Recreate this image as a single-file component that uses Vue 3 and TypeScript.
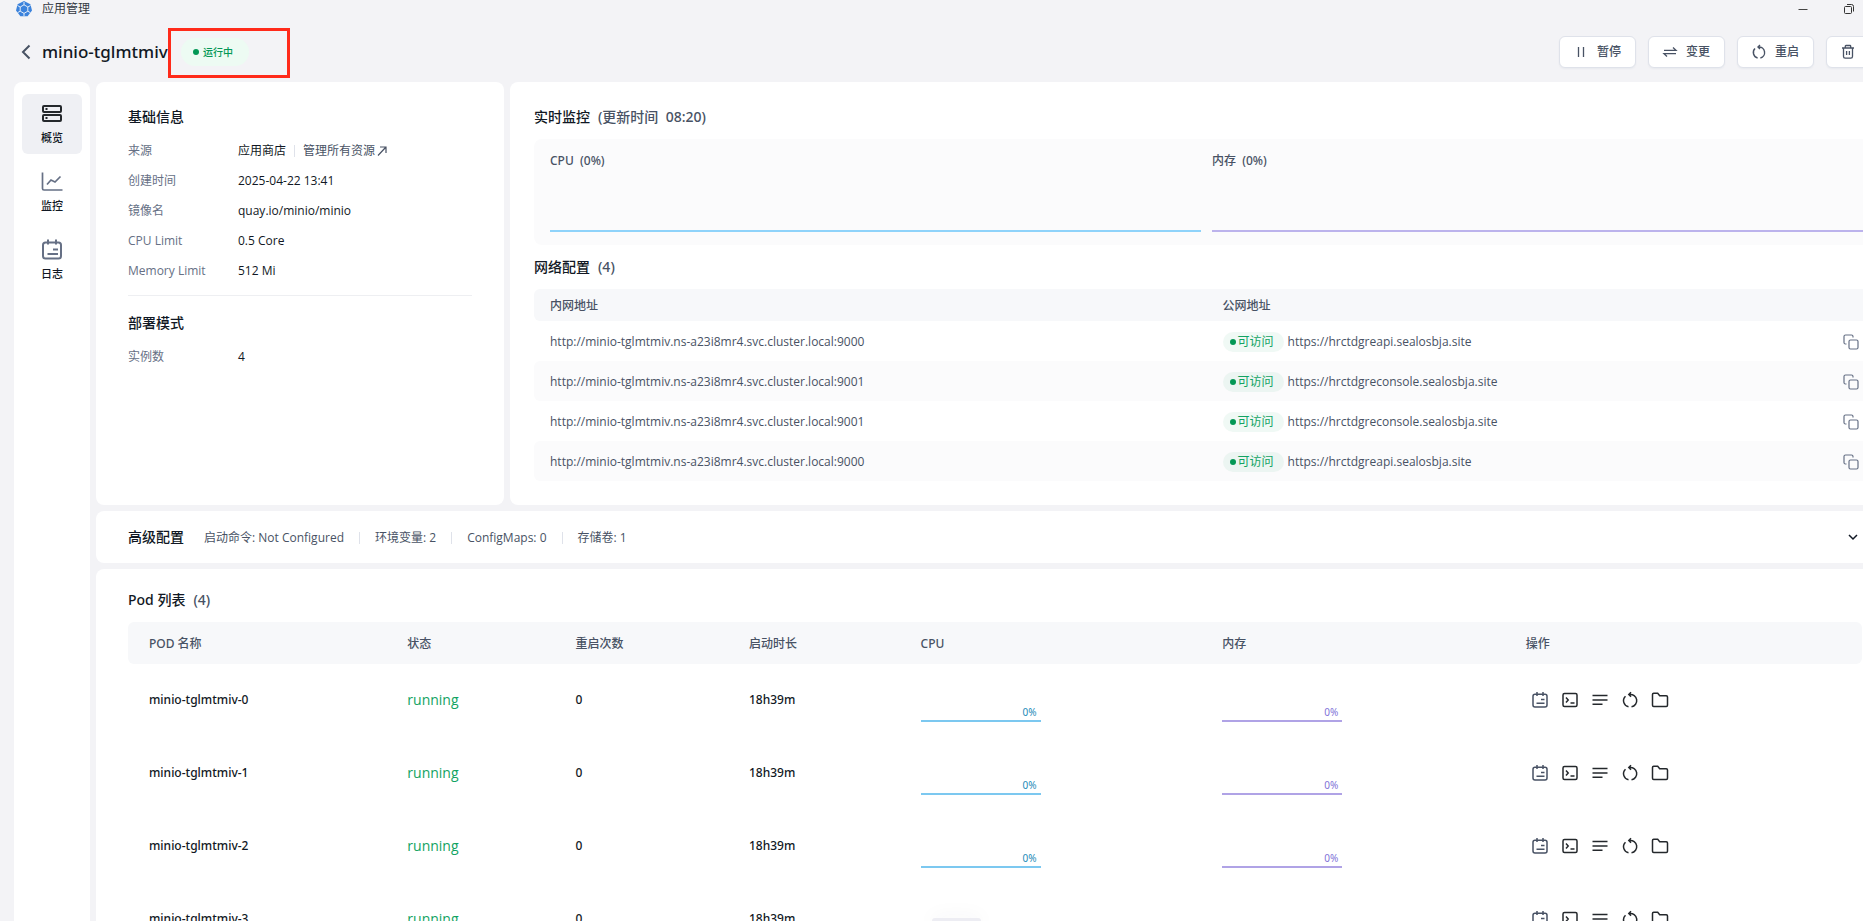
<script setup lang="ts">
interface PodRow { name: string; status: string; restarts: number; age: string }
interface NetRow { inner: string; outer: string }

const nav = [
  { key: 'overview', label: '概览' },
  { key: 'monitor', label: '监控' },
  { key: 'logs', label: '日志' },
]
const info = [
  ['创建时间', '2025-04-22 13:41'],
  ['镜像名', 'quay.io/minio/minio'],
  ['CPU Limit', '0.5 Core'],
  ['Memory Limit', '512 Mi'],
]
const host = 'http://minio-tglmtmiv.ns-a23i8mr4.svc.cluster.local'
const nets: NetRow[] = [
  { inner: `${host}:9000`, outer: 'https://hrctdgreapi.sealosbja.site' },
  { inner: `${host}:9001`, outer: 'https://hrctdgreconsole.sealosbja.site' },
  { inner: `${host}:9001`, outer: 'https://hrctdgreconsole.sealosbja.site' },
  { inner: `${host}:9000`, outer: 'https://hrctdgreapi.sealosbja.site' },
]
const advanced = ['启动命令: Not Configured', '环境变量: 2', 'ConfigMaps: 0', '存储卷: 1']
const pods: PodRow[] = [0, 1, 2, 3].map((i) => ({
  name: `minio-tglmtmiv-${i}`,
  status: 'running',
  restarts: 0,
  age: '18h39m',
}))
</script>

<template>
  <div class="screen">
    <div class="window">
      <div class="titlebar">
        <svg class="logo" viewBox="0 0 16 16" aria-hidden="true">
          <path d="M8 0 14.4 3.2 16 9.6 11.6 15.2H4.4L0 9.6 1.6 3.2Z" fill="#3b82dc" />
          <g stroke="#e4edf8" stroke-width="1" fill="none">
            <path d="M8 3.800 11.800 6v4.200L8 12.400 4.200 10.200V6Z" />
            <path d="M8 1V4M8 12.400v2.600M1.500 4.500l2.800 1.600M11.800 10.200l2.600 1.500M1.500 11.700l2.700-1.500M11.800 6l2.700-1.500" />
          </g>
        </svg>
        <span>应用管理</span>
        <div class="controls">
          <button type="button" aria-label="最小化">
            <svg width="12" height="12" viewBox="0 0 12 12"><path d="M1.500 6.500h9" stroke="#444" /></svg>
          </button>
          <button type="button" aria-label="还原">
            <svg width="12" height="12" viewBox="0 0 12 12" fill="none" stroke="#333">
              <rect x="1.500" y="3.500" width="7" height="7" rx="1" />
              <path d="M4 1.500h4.500a2 2 0 0 1 2 2V8.500" />
            </svg>
          </button>
        </div>
      </div>

      <header class="head">
        <button class="back" type="button" aria-label="返回">
          <svg width="12" height="16" viewBox="0 0 12 16" fill="none" stroke="#485264" stroke-width="2"><path d="M9.500 1.500 3 8l6.500 6.500" /></svg>
        </button>
        <h1>minio-tglmtmiv</h1>
        <span class="status"><i class="dot"></i>运行中</span>
        <div class="marker"></div>
        <div class="actions">
          <button type="button">
            <svg width="16" height="16" viewBox="0 0 16 16" fill="none" stroke="#485264" stroke-width="1.300"><path d="M5.500 3v10M10.500 3v10" /></svg>暂停
          </button>
          <button type="button">
            <svg width="16" height="16" viewBox="0 0 16 16" fill="none" stroke="#485264" stroke-width="1.300"><path d="M2 6.300h12L11 3.500M14 9.700H2L5 12.500" /></svg>变更
          </button>
          <button type="button">
            <svg width="16" height="16" viewBox="0 0 16 16" fill="none" stroke="#485264" stroke-width="1.400"><path d="M6.600 14A5.600 5.600 0 0 1 4 4.600M9.400 14A5.600 5.600 0 0 0 7.500 3M9 1 7 3l2 2" /></svg>重启
          </button>
          <button type="button" aria-label="删除">
            <svg width="16" height="16" viewBox="0 0 16 16" fill="none" stroke="#485264" stroke-width="1.300"><path d="M2 4h12M5.300 4V2.200q0-.7.700-.7h4q.7 0 .7.700V4M3.500 4v8.500q0 1.700 1.700 1.700h5.600q1.700 0 1.700-1.700V4M6.600 7v4M9.400 7v4" /></svg>
          </button>
        </div>
      </header>

      <div class="body">
        <nav class="side">
          <button v-for="(n, i) in nav" :key="n.key" type="button" :class="{ active: i === 0 }">
            <svg v-if="n.key === 'overview'" width="24" height="24" viewBox="0 0 24 24" fill="none" stroke="#24282c" stroke-width="2">
              <rect x="3" y="4" width="18" height="6" rx="1" /><rect x="3" y="13" width="18" height="6" rx="1" />
              <path d="M5.500 7h2M5.500 16h2" />
            </svg>
            <svg v-else-if="n.key === 'monitor'" width="24" height="24" viewBox="0 0 24 24" fill="none" stroke="#667085" stroke-width="1.700">
              <path d="M2.500 2.500V18.500q0 1.500 1.500 1.500H22.500M7 14.500l4-4.500 4 2 5.500-5.500" />
            </svg>
            <svg v-else width="24" height="24" viewBox="0 0 24 24" fill="none" stroke="#667085" stroke-width="2">
              <rect x="3" y="4.500" width="18" height="16" rx="2.500" /><path d="M8 1.500v5M16 1.500v5M13 11.500h5M7.500 16h10.500" />
            </svg>
            {{ n.label }}
          </button>
        </nav>

        <main class="content">
          <div class="top">
            <section class="card basic">
              <h2>基础信息</h2>
              <dl>
                <div>
                  <dt>来源</dt>
                  <dd>应用商店<i class="bar"></i><a href="#">管理所有资源<svg width="12" height="12" viewBox="0 0 12 12" fill="none" stroke="#485264" stroke-width="1.200"><path d="M2 10.500 10 2M4 2h6v6" /></svg></a></dd>
                </div>
                <div v-for="r in info" :key="r[0]"><dt>{{ r[0] }}</dt><dd>{{ r[1] }}</dd></div>
              </dl>
              <hr />
              <h2>部署模式</h2>
              <dl><div><dt>实例数</dt><dd>4</dd></div></dl>
            </section>

            <section class="card network">
              <h2>实时监控<span>(更新时间&nbsp; 08:20)</span></h2>
              <div class="charts">
                <div class="chart cpu">CPU&nbsp; (0%)</div>
                <div class="chart mem">内存&nbsp; (0%)</div>
              </div>
              <h2>网络配置<span>(4)</span></h2>
              <table class="nets">
                <thead><tr><th>内网地址</th><th>公网地址</th></tr></thead>
                <tbody>
                  <tr v-for="(n, i) in nets" :key="i">
                    <td>{{ n.inner }}</td>
                    <td>
                      <div class="public">
                        <span class="reach"><i class="dot"></i>可访问</span>
                        <a href="#">{{ n.outer }}</a>
                        <button type="button" aria-label="复制">
                          <svg width="16" height="16" viewBox="0 0 16 16" fill="none" stroke="#667085" stroke-width="1.200">
                            <rect x="6" y="6" width="9" height="9" rx="1.500" /><path d="M3.500 10H2.500Q1 10 1 8.500v-6Q1 1 2.500 1h6Q10 1 10 2.500v1" />
                          </svg>
                        </button>
                      </div>
                    </td>
                  </tr>
                </tbody>
              </table>
            </section>
          </div>

          <section class="card advanced">
            <h2>高级配置</h2>
            <ul><li v-for="a in advanced" :key="a">{{ a }}</li></ul>
            <button type="button" aria-label="展开">
              <svg width="16" height="16" viewBox="0 0 16 16" fill="none" stroke="#111824" stroke-width="1.500"><path d="m4 6 4 4 4-4" /></svg>
            </button>
          </section>

          <section class="card podcard">
            <h2>Pod 列表<span>(4)</span></h2>
            <table class="pods">
              <thead>
                <tr>
                  <th class="c-name">POD 名称</th><th class="c-status">状态</th><th class="c-restart">重启次数</th>
                  <th class="c-age">启动时长</th><th class="c-cpu">CPU</th><th class="c-mem">内存</th><th>操作</th>
                </tr>
              </thead>
              <tbody>
                <tr v-for="p in pods" :key="p.name">
                  <td>{{ p.name }}</td>
                  <td class="running">{{ p.status }}</td>
                  <td>{{ p.restarts }}</td>
                  <td>{{ p.age }}</td>
                  <td><div class="spark cpu">0%</div></td>
                  <td><div class="spark mem">0%</div></td>
                  <td>
                    <div class="ops">
                      <button type="button" aria-label="日志">
                        <svg viewBox="0 0 18 18" stroke="#485264"><rect x="2" y="3.300" width="14" height="12.700" rx="2" /><path d="M6 1v4M12 1v4M10 8.600h3.500M5.500 12.300h8" /></svg>
                      </button>
                      <button type="button" aria-label="终端">
                        <svg viewBox="0 0 18 18"><rect x="2" y="2.500" width="14" height="13" rx="1.500" /><path d="m5 6.500 2.200 2.500L5 11.500M9.500 12h4" /></svg>
                      </button>
                      <button type="button" aria-label="详情">
                        <svg viewBox="0 0 18 18"><path d="M1.500 4.500h15M1.500 9h15M1.500 13.300h10" /></svg>
                      </button>
                      <button type="button" aria-label="重启">
                        <svg viewBox="0 0 18 18"><path d="M7.500 15.800A6.200 6.200 0 0 1 4.500 5.200M10.500 15.800A6.200 6.200 0 0 0 8.500 3.500M10 1.300 7.800 3.600 10 5.800" /></svg>
                      </button>
                      <button type="button" aria-label="文件">
                        <svg viewBox="0 0 18 18"><path d="M1.500 3.500q0-1.200 1.200-1.200h4l2 2.400h6.600q1.200 0 1.200 1.200v8.400q0 1.200-1.200 1.200H2.700q-1.200 0-1.200-1.200Z" /></svg>
                      </button>
                    </div>
                  </td>
                </tr>
              </tbody>
            </table>
          </section>
        </main>
      </div>
    </div>
    <div class="dock"></div>
  </div>
</template>

<style>
body { margin: 0; background: #f3f3f6; }
</style>

<style scoped>
* { box-sizing: border-box; }
.screen {
  position: relative;
  height: 100vh;
  overflow: hidden;
  background: #f3f3f6;
  color: #111824;
  font: 400 12px/18px "Open Sans", "Noto Sans CJK SC", sans-serif;
}
/* The window runs past the right edge of the screen. */
.window { width: calc(100% + 40px); display: flex; flex-direction: column; }
h1, h2, dl, dd, ul { margin: 0; padding: 0; }
h1, h2, th, .pods td, .chart { font-family: "Noto Sans", "Noto Sans CJK SC", sans-serif; }
button { border: 0; padding: 0; background: none; font: inherit; color: inherit; display: flex; align-items: center; justify-content: center; cursor: pointer; }
a { color: inherit; text-decoration: none; }
svg { flex: none; }
h2 { font-size: 14px; line-height: 20px; font-weight: 500; }
h2 span { margin-left: 8px; color: #485264; font-weight: 500; }

.titlebar { height: 22px; padding: 0 48px 5px 16px; display: flex; align-items: center; gap: 10px; color: #333943; }
.logo { width: 16px; height: 16px; }
.controls { margin-left: auto; display: flex; gap: 34px; }

.head { position: relative; height: 60px; padding: 0 0 0 20px; display: flex; align-items: center; }
.back { width: 12px; }
h1 { margin-left: 10px; font-size: 17px; line-height: 24px; font-weight: 500; width: 139px; white-space: nowrap; }
.status { height: 28px; padding: 0 16px 0 12px; display: flex; align-items: center; gap: 4px; border-radius: 14px; background: #edfbf3; color: #039855; font-size: 10px; font-weight: 500; }
.dot { width: 6px; height: 6px; border-radius: 50%; background: #039855; }
.marker { position: absolute; left: 168px; top: 6px; width: 122px; height: 50px; border: 3px solid #ff2a1a; }
.actions { margin-left: auto; display: flex; gap: 12px; }
.actions button { height: 32px; min-width: 77px; padding: 0 13px; gap: 8px; justify-content: flex-start; border: 1px solid #dfe2ea; border-radius: 6px; background: #fff; color: #485264; font-weight: 500; box-shadow: 0 1px 2px rgba(19, 51, 107, 0.05); }

.body { display: flex; gap: 6px; padding-left: 14px; align-items: stretch; }
.side { flex: none; width: 76px; padding: 12px 8px; display: flex; flex-direction: column; gap: 8px; background: #fff; border-radius: 8px; }
.side button { width: 60px; height: 60px; flex-direction: column; gap: 4px; border-radius: 6px; font-size: 11px; line-height: 16px; font-weight: 500; }
.side .active { background: #eff0f4; }

.content { flex: 1; min-width: 0; display: flex; flex-direction: column; gap: 6px; }
.card { background: #fff; border-radius: 8px; }
.top { display: flex; gap: 6px; }
.basic { flex: none; width: 408px; padding: 25px 32px; }
dl > div { display: flex; height: 18px; margin-bottom: 12px; }
.basic h2 { margin-bottom: 15px; }
dt { width: 110px; color: #667085; }
dd { display: flex; align-items: center; }
dd a { display: flex; align-items: center; gap: 1px; color: #485264; }
.bar { width: 1px; height: 12px; margin: 0 8px; background: #dfe2ea; }
hr { border: 0; height: 1px; margin: 15px 0 17px; background: #eeeff2; }

.network { flex: 1; min-width: 0; padding: 25px 24px 24px; }
.charts { margin: 12px 0; padding: 13px 16px; display: grid; grid-template-columns: 1fr 1fr; gap: 11px; height: 106px; border-radius: 8px; background: #fbfbfc; color: #485264; font-weight: 500; }
.chart { height: 80px; border-bottom: 2px solid; }
.chart.cpu { border-color: #8fd3fa; }
.chart.mem { border-color: #bcb3ec; }
table { width: 100%; border-collapse: separate; border-spacing: 0; table-layout: fixed; }
th { text-align: left; font-weight: 500; color: #485264; background: #f7f8fa; }
.nets th { height: 32px; padding: 2px 16px 0; }
.nets td { height: 40px; padding: 2px 16px 0; color: #485264; font-weight: 500; }
.nets tr:nth-child(even) td { background: #fbfbfc; }
th:first-child, td:first-child { border-radius: 6px 0 0 6px; }
th:last-child, td:last-child { border-radius: 0 6px 6px 0; }
.nets { margin-top: 12px; }
.public { display: flex; align-items: center; gap: 4px; }
.public button { width: 24px; height: 24px; margin-left: auto; }
.reach { height: 20px; padding: 0 10px 0 7px; display: flex; align-items: center; gap: 2px; border-radius: 10px; background: rgba(3, 152, 85, 0.06); color: #12a362; font-weight: 400; }

.advanced { height: 52px; padding: 0 42px 0 32px; display: flex; align-items: center; color: #485264; }
.advanced h2 { color: #111824; }
.advanced ul { display: flex; margin-left: 20px; padding-top: 2px; list-style: none; }
.advanced li { display: flex; align-items: center; }
.advanced li + li::before { content: ""; width: 1px; height: 12px; margin: 0 15px; background: #dfe2ea; }
.advanced button { margin-left: auto; }

.podcard { padding: 21px 41px 32px 32px; }
.pods { margin-top: 12px; }
.pods th { height: 42px; padding: 2px 21px 0; }
.pods td { height: 73px; padding: 0 21px 2px; font-weight: 500; }
.c-name { width: 14.900%; }
.c-status { width: 9.700%; }
.c-restart { width: 10%; }
.c-age { width: 9.900%; }
.c-cpu { width: 17.400%; }
.c-mem { width: 17.500%; }
.pods .running { color: #12a362; font-family: "Open Sans", sans-serif; font-size: 14px; font-weight: 400; }
.spark { width: 120px; height: 44px; padding: 27px 4px 0; border-bottom: 2px solid; text-align: right; font-size: 10px; line-height: 15px; font-weight: 400; }
.spark.cpu { border-color: #7cc8f0; color: #1d8bb8; }
.spark.mem { border-color: #b0a3e6; color: #8172d8; }
.ops { display: flex; gap: 2px; }
.ops button { width: 28px; height: 28px; }
.ops svg { width: 18px; height: 18px; fill: none; stroke-width: 1.500; }
.ops svg:not([stroke]) { stroke: #24282c; }

.dock { position: absolute; left: 50%; bottom: 0; width: 49px; height: 3px; border-radius: 4px 4px 0 0; background: #ededf3; box-shadow: 0 2px 20px rgba(60, 60, 80, 0.16); }
</style>
